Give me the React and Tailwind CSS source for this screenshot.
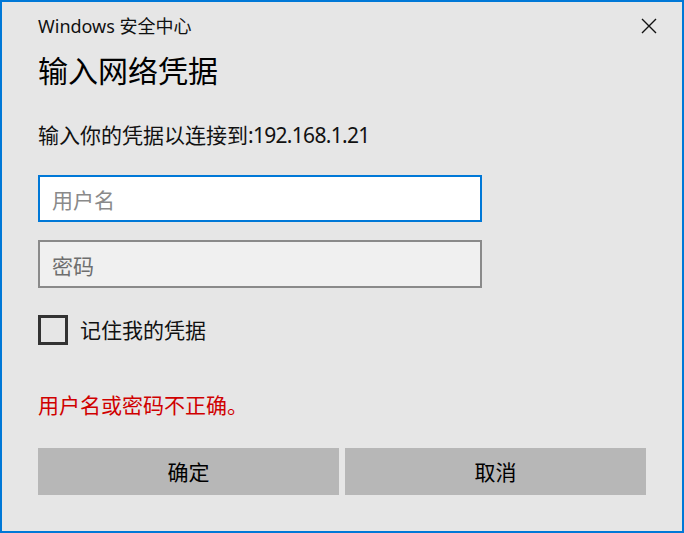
import React from "react";

export default function App() {
  return (
    <div
      className="w-[684px] h-[533px] border-2 border-[#0078d7] bg-[#e6e6e6] flex flex-col pl-[36px] text-black font-['Noto_Sans','Noto_Sans_CJK_SC',sans-serif]"
    >
      <div className="mt-[12px] h-[24px] flex items-center justify-between pr-[25px]">
        <span className="text-[18px] leading-[24px] text-[#111]">Windows 安全中心</span>
        <svg width="16" height="16" viewBox="0 0 16 16" className="text-[#111]">
          <path d="M1 1 L15 15 M15 1 L1 15" stroke="currentColor" strokeWidth="1.4" fill="none" />
        </svg>
      </div>
      <div className="mt-[13px] text-[30px] leading-[40px] text-[#000]">输入网络凭据</div>
      <div className="mt-[30px] text-[21px] leading-[28px] text-[#111]">
        输入你的凭据以连接到<span className="tracking-[-0.7px]">:192.168.1.21</span>
      </div>
      <div className="mt-[26px] w-[444px] h-[47px] border-2 border-[#0078d7] bg-white flex items-center pl-[12px] pt-[3px]">
        <span className="text-[21px] leading-[28px] text-[#8a8a8a]">用户名</span>
      </div>
      <div className="mt-[18px] w-[444px] h-[48px] border-2 border-[#8a8a8a] bg-[#f0f0f0] flex items-center pl-[12px] pt-[3px]">
        <span className="text-[21px] leading-[28px] text-[#6e6e6e]">密码</span>
      </div>
      <div className="mt-[27px] h-[30px] flex items-center gap-[12px]">
        <div className="w-[30px] h-[30px] border-[3px] border-[#333333]" />
        <span className="text-[21px] leading-[28px] text-[#111]">记住我的凭据</span>
      </div>
      <div className="mt-[46px] text-[21px] leading-[28px] text-[#d00000]">用户名或密码不正确。</div>
      <div className="mt-[29px] flex gap-[6px]">
        <div className="w-[301px] h-[47px] bg-[#b7b7b7] flex items-center justify-center pt-[1px] text-[21px] leading-[28px] text-black">确定</div>
        <div className="w-[301px] h-[47px] bg-[#b7b7b7] flex items-center justify-center pt-[1px] text-[21px] leading-[28px] text-black">取消</div>
      </div>
    </div>
  );
}
